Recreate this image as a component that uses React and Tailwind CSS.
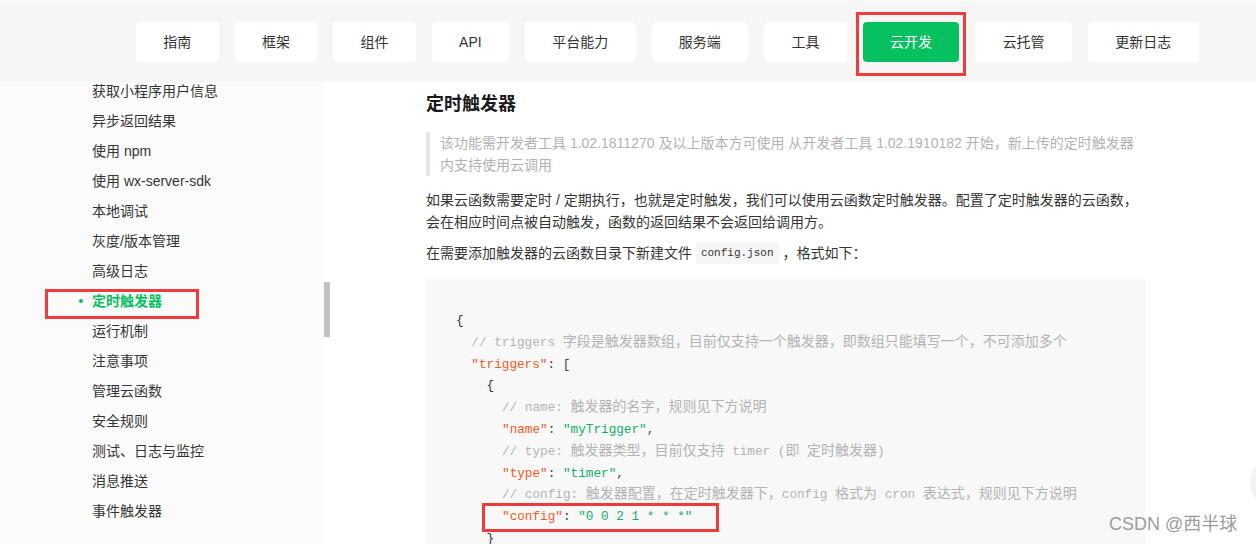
import React from 'react';

const navItems = ['指南', '框架', '组件', 'API', '平台能力', '服务端', '工具', '云开发', '云托管', '更新日志'];

const sideItems = [
  '获取小程序用户信息',
  '异步返回结果',
  '使用 npm',
  '使用 wx-server-sdk',
  '本地调试',
  '灰度/版本管理',
  '高级日志',
  '定时触发器',
  '运行机制',
  '注意事项',
  '管理云函数',
  '安全规则',
  '测试、日志与监控',
  '消息推送',
  '事件触发器',
];

// CJK runs inside code are rendered a bit wider than the mono latin
function Mixed({ text }) {
  return text.split(/([\u3000-\u303f\u4e00-\u9fff\uff00-\uffef]+)/).map((part, i) =>
    i % 2 === 1 ? (
      <span key={i} className="text-[14px]">{part}</span>
    ) : (
      <React.Fragment key={i}>{part}</React.Fragment>
    )
  );
}

const K = ({ children }) => <span className="text-[#f05a24]">"{children}"</span>;
const S = ({ children }) => <span className="text-[#12ad6a]">"{children}"</span>;
const P = ({ children }) => <span className="text-[#444]">{children}</span>;
const C = ({ text }) => (
  <span className="text-[#b3b3b3]">
    <Mixed text={text} />
  </span>
);

function Line({ indent = 0, children, boxed }) {
  const pad = ['pl-0', 'pl-[15.3px]', 'pl-[30.6px]', 'pl-[46px]'][indent];
  return (
    <div className={`relative h-[21.8px] whitespace-pre ${pad}`}>
      {children}
      {boxed && (
        <span className="absolute left-[26px] top-[-3px] w-[237px] h-[29px] border-[3px] border-[#ee3b3b]" />
      )}
    </div>
  );
}

export default function App() {
  return (
    <div className="relative h-[544px] w-[1256px] overflow-hidden bg-white font-['Liberation_Sans','Noto_Sans_CJK_SC',sans-serif] text-[#353535]">
      {/* 顶部导航 */}
      <header className="h-[82px] bg-[#f6f6f6] border-t border-[#fbfbfb] flex items-start gap-4 pt-[21px] pl-[136px]">
        {navItems.map((item) =>
          item === '云开发' ? (
            <div key={item} className="relative">
              <button className="h-[40px] px-[27.3px] rounded-[4px] bg-[#07c160] text-white text-[14px]">{item}</button>
              <span className="absolute -left-[7px] -right-[7px] -top-[10px] -bottom-[14px] border-[3px] border-[#ee3b3b]" />
            </div>
          ) : (
            <button key={item} className="h-[40px] px-[27.3px] rounded-[4px] bg-white text-[#333] text-[14px]">
              {item}
            </button>
          )
        )}
      </header>

      <div className="flex h-[462px]">
        {/* 侧边栏 */}
        <aside className="w-[324px] bg-[#fbfbfb] overflow-hidden">
          <ul className="-mt-[6px] text-[14px]">
            {sideItems.map((item) => {
              const active = item === '定时触发器';
              return (
                <li key={item} className="relative h-[30px] flex items-center pl-[92px]">
                  {active && (
                    <>
                      <span className="absolute left-[79px] top-[13px] w-[4px] h-[4px] rounded-full bg-[#07c160]" />
                      <span className="absolute left-[45px] top-[3px] w-[154px] h-[30px] border-[3px] border-[#ee3b3b]" />
                    </>
                  )}
                  <span className={active ? 'text-[#07c160] font-bold' : ''}>{item}</span>
                </li>
              );
            })}
          </ul>
        </aside>
        <div className="w-[6px]">
          <div className="mt-[200px] h-[55px] bg-[#c1c1c1]" />
        </div>

        {/* 正文 */}
        <main className="flex-1 pl-[96px] pt-[9px]">
          <h1 className="text-[18px] leading-[26px] font-bold text-[#1a1a1a]">定时触发器</h1>

          <blockquote className="mt-[15px] w-[720px] border-l-[4px] border-[#e7e7e7] pl-[10px] text-[14px] leading-[22px] text-[#b2b2b2]">
            该功能需开发者工具 1.02.1811270 及以上版本方可使用 从开发者工具 1.02.1910182 开始，新上传的定时触发器
            <br />
            内支持使用云调用
          </blockquote>

          <p className="mt-[13px] w-[720px] text-[14px] leading-[22px]">
            如果云函数需要定时 / 定期执行，也就是定时触发，我们可以使用云函数定时触发器。配置了定时触发器的云函数，
            <br />
            会在相应时间点被自动触发，函数的返回结果不会返回给调用方。
          </p>

          <p className="mt-[9px] text-[14px] leading-[22px]">
            在需要添加触发器的云函数目录下新建文件{' '}
            <code className="inline-block h-[22px] px-[5px] rounded-[3px] bg-[#f6f6f6] font-['Liberation_Mono',monospace] text-[11px] leading-[22px] align-top text-[#333]">
              config.json
            </code>{' '}
            ，格式如下：
          </p>

          <div className="mt-[15px] w-[720px] h-[300px] bg-[#f8f8f8] pl-[30px] pt-[31px] font-['Liberation_Mono','Noto_Sans_CJK_SC',monospace] text-[12.7px] leading-[21.8px] text-[#333]">
            <Line>{'{'}</Line>
            <Line indent={1}>
              <C text="// triggers 字段是触发器数组，目前仅支持一个触发器，即数组只能填写一个，不可添加多个" />
            </Line>
            <Line indent={1}>
              <K>triggers</K>
              <P>: [</P>
            </Line>
            <Line indent={2}>{'{'}</Line>
            <Line indent={3}>
              <C text="// name: 触发器的名字，规则见下方说明" />
            </Line>
            <Line indent={3}>
              <K>name</K>
              <P>: </P>
              <S>myTrigger</S>
              <P>,</P>
            </Line>
            <Line indent={3}>
              <C text="// type: 触发器类型，目前仅支持 timer (即 定时触发器)" />
            </Line>
            <Line indent={3}>
              <K>type</K>
              <P>: </P>
              <S>timer</S>
              <P>,</P>
            </Line>
            <Line indent={3}>
              <C text="// config: 触发器配置，在定时触发器下，config 格式为 cron 表达式，规则见下方说明" />
            </Line>
            <Line indent={3} boxed>
              <K>config</K>
              <P>: </P>
              <S>0 0 2 1 * * *</S>
            </Line>
            <Line indent={2}>{'}'}</Line>
          </div>
        </main>
      </div>

      {/* 浮动按钮 + 水印 */}
      <div className="absolute left-[1250px] top-[456px] w-[52px] h-[52px] rounded-full bg-[#f3f3f3]" />
      <div className="absolute left-[1109px] top-[512px] text-[18px] leading-[24px] text-[#9c9c9c]">CSDN @西半球</div>
    </div>
  );
}
